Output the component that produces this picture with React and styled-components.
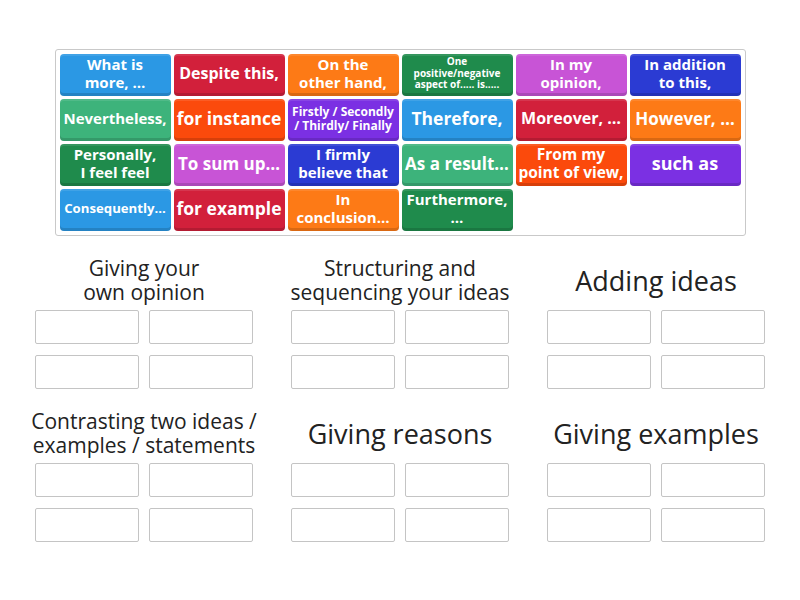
import React from "react";
import styled, { createGlobalStyle } from "styled-components";

const GlobalStyle = createGlobalStyle`
  html, body { margin: 0; padding: 0; background: #ffffff; }
  body { font-family: "Open Sans", "Noto Sans", sans-serif; }
`;

const Page = styled.div`
  width: 800px;
  min-height: 600px;
  padding-top: 49px;
  box-sizing: border-box;
  display: flex;
  flex-direction: column;
  align-items: center;
`;

const Bank = styled.div`
  box-sizing: border-box;
  width: 691px;
  padding: 4px;
  border: 1px solid #c9c9c9;
  border-radius: 3px;
  display: grid;
  grid-template-columns: repeat(6, 111px);
  grid-auto-rows: 42px;
  gap: 3px;
  background: #fff;
`;

const Tile = styled.div`
  box-sizing: border-box;
  display: flex;
  align-items: center;
  justify-content: center;
  text-align: center;
  white-space: pre;
  padding: 0 2px 3px;
  border-radius: 4px;
  background: ${(p) => p.$bg};
  box-shadow: inset 0 -3px 0 rgba(0, 0, 0, 0.14), inset 0 2px 0 rgba(255, 255, 255, 0.1);
  color: #ffffff;
  font-family: "Open Sans", "Noto Sans", sans-serif;
  font-weight: 700;
  font-size: ${(p) => p.$size}px;
  line-height: 1.14;
  overflow: hidden;
`;

const Groups = styled.div`
  margin-top: 17px;
  width: 730px;
  display: grid;
  grid-template-columns: repeat(3, 218px);
  column-gap: 38px;
  row-gap: 17px;
`;

const Group = styled.div`
  display: flex;
  flex-direction: column;
`;

const Title = styled.div`
  box-sizing: border-box;
  height: 52px;
  padding-top: 4px;
  margin-bottom: 5px;
  display: flex;
  align-items: center;
  justify-content: center;
  text-align: center;
  white-space: pre;
  color: #222222;
  font-family: "Open Sans", "Noto Sans", sans-serif;
  font-weight: 400;
  font-size: ${(p) => p.$size}px;
  line-height: 1.14;
`;

const Slots = styled.div`
  display: grid;
  grid-template-columns: repeat(2, 1fr);
  grid-auto-rows: 34px;
  column-gap: 10px;
  row-gap: 11px;
`;

const Slot = styled.div`
  box-sizing: border-box;
  border: 1px solid #c4c4c4;
  border-radius: 2px;
  background: #fff;
`;

const C = {
  blue: "#2b98e4",
  red: "#d2203b",
  orange: "#fd7a16",
  dgreen: "#1f8b4c",
  pink: "#c854d6",
  indigo: "#2b3bd3",
  lgreen: "#3db37b",
  ored: "#fb4a0c",
  purple: "#7b30e3",
};

const tiles = [
  { t: "What is\nmore, …", c: C.blue, s: 15 },
  { t: "Despite this,", c: C.red, s: 16 },
  { t: "On the\nother hand,", c: C.orange, s: 15 },
  { t: "One\npositive/negative\naspect of..... is.....", c: C.dgreen, s: 10 },
  { t: "In my\nopinion,", c: C.pink, s: 15 },
  { t: "In addition\nto this,", c: C.indigo, s: 15 },
  { t: "Nevertheless,", c: C.lgreen, s: 15 },
  { t: "for instance", c: C.ored, s: 17.5 },
  { t: "Firstly / Secondly\n/ Thirdly/ Finally", c: C.purple, s: 12 },
  { t: "Therefore,", c: C.blue, s: 17.5 },
  { t: "Moreover, …", c: C.red, s: 16 },
  { t: "However, …", c: C.orange, s: 17 },
  { t: "Personally,\nI feel feel", c: C.dgreen, s: 15 },
  { t: "To sum up…", c: C.pink, s: 17 },
  { t: "I firmly\nbelieve that", c: C.indigo, s: 15 },
  { t: "As a result…", c: C.lgreen, s: 17 },
  { t: "From my\npoint of view,", c: C.ored, s: 15.5 },
  { t: "such as", c: C.purple, s: 18 },
  { t: "Consequently…", c: C.blue, s: 13.2 },
  { t: "for example", c: C.red, s: 17.5 },
  { t: "In\nconclusion…", c: C.orange, s: 15 },
  { t: "Furthermore,\n…", c: C.dgreen, s: 15 },
];

const groups = [
  { t: "Giving your\nown opinion", s: 21 },
  { t: "Structuring and\nsequencing your ideas", s: 21 },
  { t: "Adding ideas", s: 27 },
  { t: "Contrasting two ideas /\nexamples / statements", s: 21 },
  { t: "Giving reasons", s: 27 },
  { t: "Giving examples", s: 27 },
];

export default function App() {
  return (
    <>
      <GlobalStyle />
      <Page>
        <Bank>
          {tiles.map((tile, i) => (
            <Tile key={i} $bg={tile.c} $size={tile.s}>
              {tile.t}
            </Tile>
          ))}
        </Bank>
        <Groups>
          {groups.map((g, i) => (
            <Group key={i}>
              <Title $size={g.s}>{g.t}</Title>
              <Slots>
                <Slot />
                <Slot />
                <Slot />
                <Slot />
              </Slots>
            </Group>
          ))}
        </Groups>
      </Page>
    </>
  );
}
